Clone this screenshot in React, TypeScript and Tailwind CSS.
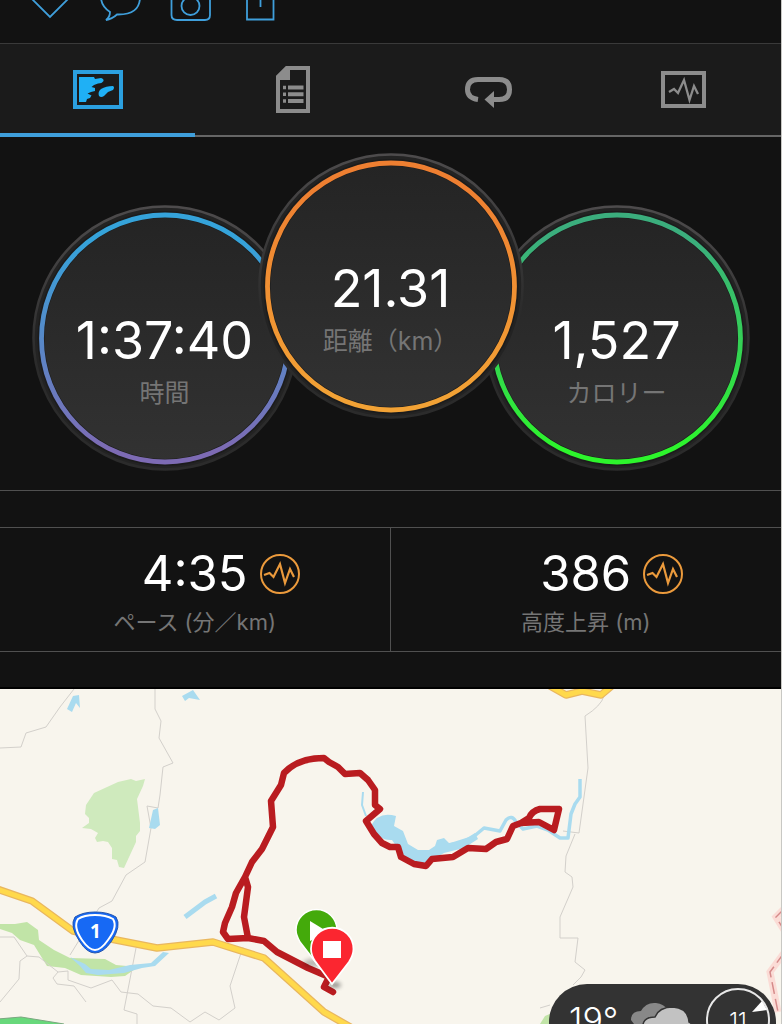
import React from 'react';

const PULSE = 'M-16 1 L-10.500 -1 L-6.500 3 L0 -10 L5 9 L10 -5 L14 3';

const tabs = [
  {
    id: 'map',
    label: 'マップ',
    icon: (
      <svg className="w-[52px] h-12" viewBox="72 66 52 48">
        <rect x="75" y="72" width="46" height="35" fill="none" stroke="currentColor" strokeWidth="4" />
        <path
          fill="#1fb0f5"
          d="M79 77H94L95 79L101 78Q104 79 103.500 81Q102 83.500 98 83.500L94 85L91.500 87L95 88V91L91 92L87.500 93.500L91.500 95.500L90 98L87 99L86 102H79ZM99 96Q97.500 92 101 89Q106 86 113 86Q115 87 113 90L108 92L104 96Q101 98 99 96Z"
        />
      </svg>
    ),
  },
  {
    id: 'details',
    label: '詳細',
    icon: (
      <svg className="w-[52px] h-12" viewBox="267 66 52 48">
        <path fill="none" stroke="currentColor" strokeWidth="4" d="M278 77L287 68H308V111H278Z" />
        <path fill="currentColor" d="M276 76L286 66H290V80H276Z" />
        <path stroke="currentColor" strokeWidth="4" d="M288 87.500H303.500M288 94.300H303.500M288 101.100H303.500" />
        <path stroke="currentColor" strokeWidth="3.500" d="M283 87.500H286M283 94.300H286M283 101.100H286" />
      </svg>
    ),
  },
  {
    id: 'laps',
    label: 'ラップ',
    icon: (
      <svg className="w-[52px] h-12" viewBox="462 66 52 48">
        <path fill="none" stroke="currentColor" strokeWidth="5" d="M478 99.500Q467.500 98 467.500 89.500Q467.500 79.500 478 79.500H499Q509.500 79.500 509.500 89.500Q509.500 99.500 499 99.500H492" />
        <path fill="currentColor" d="M484.500 99.500L494 91V108Z" />
      </svg>
    ),
  },
  {
    id: 'charts',
    label: 'グラフ',
    icon: (
      <svg className="w-[52px] h-12" viewBox="657 66 52 48">
        <rect x="663" y="73" width="41" height="33" fill="none" stroke="currentColor" strokeWidth="4" />
        <path fill="none" stroke="currentColor" strokeWidth="2.300" d="M669 92L674 89L678 93L684 80L689.500 100L694 86L698 94" />
      </svg>
    ),
  },
];

const rings = [
  { id: 'time', value: '1:37:40', label: '時間', from: '#35a3da', to: '#7d6bb4', place: 'mt-[52px]' },
  { id: 'distance', value: '21.31', label: '距離（km）', from: '#ee7f31', to: '#f2a235', place: '-mx-10 z-10' },
  { id: 'calories', value: '1,527', label: 'カロリー', from: '#3bae7d', to: '#2df52c', place: 'mt-[52px]' },
];

const stats = [
  { id: 'pace', value: '4:35', label: 'ペース (分／km)' },
  { id: 'climb', value: '386', label: '高度上昇 (m)' },
];

const ActionBar = () => (
  <header className="h-11 border-b border-[#3a3a3a] px-[30px]">
    <div className="flex gap-7 text-[#3f9fdb]">
      <button type="button" aria-label="いいね" className="block">
        <svg className="block w-[42px] h-6" viewBox="30 0 42 24" fill="none" stroke="currentColor" strokeWidth="1.800">
          <path d="M32 -1L50 17L68 -1" />
        </svg>
      </button>
      <button type="button" aria-label="コメント" className="block">
        <svg className="block w-[42px] h-6" viewBox="100 0 42 24" fill="none" stroke="currentColor" strokeWidth="1.800">
          <path d="M101 -3Q101 6 110 12Q110 17 106 20Q112 19 117 14.500Q140 15 140 -3" />
        </svg>
      </button>
      <button type="button" aria-label="写真" className="block">
        <svg className="block w-[42px] h-6" viewBox="170 0 42 24" fill="none" stroke="currentColor" strokeWidth="1.800">
          <path d="M171.500 -4V15Q171.500 20 177 20H205Q210 20 210 15V-4" />
          <circle cx="190.500" cy="6" r="9" />
        </svg>
      </button>
      <button type="button" aria-label="共有" className="block">
        <svg className="block w-[42px] h-6" viewBox="240 0 42 24" fill="none" stroke="currentColor" strokeWidth="1.800">
          <path d="M247 -2V19.500H273.500V-2M260.500 -2V7" />
        </svg>
      </button>
    </div>
  </header>
);

const TabBar = () => (
  <nav role="tablist" className="grid grid-cols-4 bg-[#1b1b1b]">
    {tabs.map((tab, i) => (
      <button
        key={tab.id}
        type="button"
        role="tab"
        aria-label={tab.label}
        aria-selected={i === 0}
        className={
          i === 0
            ? 'flex h-[93px] items-center justify-center border-b-4 border-[#3f9fdb] pt-0.5 text-[#2ba0e0]'
            : 'flex h-[93px] items-center justify-center border-b-2 border-[#666] text-[#8c8c8c]'
        }
      >
        {tab.icon}
      </button>
    ))}
  </nav>
);

const Rings = () => (
  <section className="flex items-start justify-center border-b border-[#505050] pt-4 pb-[19px]">
    {rings.map((ring) => (
      <div key={ring.id} className={`relative grid size-[266px] shrink-0 ${ring.place}`}>
        <svg className="col-start-1 row-start-1 size-[266px]" viewBox="0 0 266 266">
          <defs>
            <linearGradient id={`${ring.id}-ring`} x1="0" y1="0" x2="0" y2="1">
              <stop offset="0.1" stopColor={ring.from} />
              <stop offset="0.95" stopColor={ring.to} />
            </linearGradient>
            <linearGradient id={`${ring.id}-face`} x1="0" y1="0" x2="0" y2="1">
              <stop offset="0" stopColor="#242424" />
              <stop offset="1" stopColor="#323232" />
            </linearGradient>
            <linearGradient id={`${ring.id}-edge`} x1="0" y1="0" x2="0" y2="1">
              <stop offset="0" stopColor="#4d4b4c" />
              <stop offset="0.6" stopColor="#2b2b2b" />
              <stop offset="1" stopColor="#2b2b2b" />
            </linearGradient>
          </defs>
          <circle cx="133" cy="133" r="131.500" fill="#232323" stroke={`url(#${ring.id}-edge)`} strokeWidth="2.500" />
          <circle cx="133" cy="133.500" r="124" fill={`url(#${ring.id}-face)`} stroke="#1c1c1c" strokeWidth="7" />
          <circle cx="133" cy="133.500" r="123.500" fill="none" stroke={`url(#${ring.id}-ring)`} strokeWidth="4.800" />
        </svg>
        <div className="col-start-1 row-start-1 pt-[106px] text-center">
          <p className="text-[52px] leading-[60px] text-white">{ring.value}</p>
          <p className="mt-1 text-[25px] leading-9 text-[#757575]">{ring.label}</p>
        </div>
      </div>
    ))}
  </section>
);

const Stats = () => (
  <section className="mt-9 mb-[35px] grid grid-cols-2 divide-x divide-[#505050] border-y border-[#505050]">
    {stats.map((stat) => (
      <div key={stat.id} className="h-[123px] pt-4">
        <div className="grid grid-cols-[1fr_auto_1fr] items-center gap-x-3">
          <p className="col-start-2 text-[49px] leading-[60px] text-white">{stat.value}</p>
          <button type="button" aria-label={`${stat.label} グラフ`} className="size-10">
            <svg className="size-10" viewBox="-20 -20 40 40" fill="none" stroke="#eb9a3c" strokeWidth="2">
              <circle r="19" />
              <path d={PULSE} strokeWidth="2.200" />
            </svg>
          </button>
        </div>
        <p className="text-center text-[22px] leading-9 text-[#757575]">{stat.label}</p>
      </div>
    ))}
  </section>
);

const RouteMap = () => (
  <svg className="block w-full" viewBox="0 689 781 335" role="img" aria-label="ルートマップ">
    <defs>
      <filter id="pin-shadow" x="-50%" y="-50%" width="200%" height="200%">
        <feGaussianBlur stdDeviation="2" />
      </filter>
    </defs>
    <rect y="689" width="782" height="336" fill="#f8f5ed" />

    {/* parks */}
    <g fill="#cfeabd">
      <path d="M145 779L143 786L137 799L140 823L140 831L136 836V842L124 868L119 867L117 860L112 859V848L108 842L103 841L97 842L95 838L98 833L91 829L82 828L89 823V818L85 814L86 805L94 793L118 782L131 779L136 781Z" />
      <path fill="#c1e4a7" d="M0 924L15 924L27 922L38 930L39 940L54 950L70 958L105 959L116 965L138 967L125 976L111 977L81 975L65 968L47 966L34 945L20 940L12 933L0 929Z" />
      <path fill="#c1e4a7" d="M540 1024L545 1016L552 1013V1024Z" />
    </g>
    <path d="M-2 1019L21 1017L64 1024V1030H-2Z" fill="#68d87b" stroke="#7aa77f" strokeWidth="1" />

    {/* minor roads */}
    <g fill="none" stroke="#d3d0cb" strokeWidth="1">
      <path d="M0 748L21 747L26 733L46 727L60 707L74 689" />
      <path d="M155 689V709L161 721L159 738L173 763L163 767L160 795L158 808L147 806L151 828L145 862L126 875L112 901L99 908L70 955" />
      <path d="M0 937H14L27 956L39 957L58 972L68 971V980L91 988L112 980L121 992L138 994L153 1006L171 1008L190 1022L205 1012L219 1020L235 1008L230 986L243 947" />
      <path d="M27 956L20 961L19 979L0 1002M58 972L53 978L57 984L74 986L86 1002M136 948L124 1010L137 1014V1024" />
      <path d="M604 696Q601 706 585 716L588 768L579 833L563 831M575 834L566 856L565 872L572 877L573 887L560 917V938H578L575 962L585 970L581 977L573 985M540 1008L550 1005" />
    </g>

    {/* water */}
    <g fill="#a9dbef">
      <path d="M73 696L79 695L80 708L76 703L72 712L67 709ZM182 696L193 690L200 700L189 698L185 701ZM153 810L158 808L160 825L155 829L149 828Z" />
      <path d="M371 826Q378 811 396 816L394 826L403 831L408 844L418 850L429 850L435 846L437 840L444 838L449 843L462 841L475 833L478 839L464 848L444 853L430 861L424 864L407 860L401 853L392 840Q379 841 371 826Z" />
      <path d="M70 957L85 964L91 969L109 970L130 965L151 963L163 952L169 953L155 966L142 968L124 973L98 975L86 973L80 966Z" />
    </g>
    <g fill="none" stroke="#a9dbef" strokeWidth="4" strokeLinejoin="round">
      <path d="M185 917L205 902L216 896" strokeWidth="5" />
      <path d="M363 792L362 805L366 816" strokeWidth="2" />
      <path d="M450 845L472 838L484 828L500 831L506 820Q512 814 516 822L523 829L537 826L548 830L560 838L568 838L571 814L575 804L580 797V779" strokeWidth="3.500" />
    </g>

    {/* national roads */}
    <g fill="none" strokeLinejoin="round">
      <path d="M-3 889L32 901L73 931L116 940L157 948L213 942L264 958L324 1012L352 1028M550 686L566 695L582 691L601 695L614 684" stroke="#e9b75f" strokeWidth="7.500" />
      <path d="M-3 889L32 901L73 931L116 940L157 948L213 942L264 958L324 1012L352 1028M550 686L566 695L582 691L601 695L614 684" stroke="#ffd94c" strokeWidth="5" />
    </g>

    {/* boundary */}
    <g fill="none">
      <path d="M784 909L776 917L784 930M784 953L770 972L778 1012" stroke="#fbdcd6" strokeWidth="7" />
      <path d="M784 909L776 917L784 930M784 953L770 972L778 1012" stroke="#d58b8a" strokeWidth="1.500" strokeDasharray="12 5" />
    </g>

    {/* recorded track */}
    <path
      d="M333 992L324 987L329 977L308 968L277 952L264 941L248 938L244 917L248 887L245 877L236 893L232 907L225 923L223 932L228 939L248 938M245 877L252 862L262 849L273 827L271 801L281 785L284 773Q298 758 324 758L329 762L338 767L345 774L360 773L368 780L375 790L375 805L380 809L366 821L374 834L382 843L390 847L398 847L401 857L414 864L426 866L432 859L453 857L468 848L486 849L496 842L507 839L513 826L521 823L539 822L554 830L559 809L540 809Q532 811 529 818L521 823"
      fill="none"
      stroke="#b91c20"
      strokeWidth="6.500"
      strokeLinejoin="round"
      strokeLinecap="round"
    />

    {/* route shield */}
    <path d="M95 912Q108 912 116 917Q122 926 111 942Q103 953 95 953Q87 953 80 942Q69 926 75 917Q83 912 95 912Z" fill="#1769f4" stroke="#2455ad" strokeWidth="1" />
    <path d="M95 915Q106 915 113 919Q118 927 108 940Q101 950 95 950Q89 950 82 940Q73 927 78 919Q84 915 95 915Z" fill="#1769f4" stroke="#fff" strokeWidth="2" />
    <text x="95.500" y="938" textAnchor="middle" fill="#fff" fontSize="19" fontWeight="700" fontFamily="Noto Sans">1</text>

    {/* start and finish pins */}
    <ellipse cx="313" cy="963" rx="10" ry="4" fill="#000" opacity="0.25" filter="url(#pin-shadow)" />
    <ellipse cx="335" cy="985" rx="6" ry="3" fill="#000" opacity="0.4" filter="url(#pin-shadow)" />
    <path d="M317 964L300 942Q296 935 296 930A20.500 20.500 0 0 1 337 930Q337 936 333 942Z" fill="#44aa0b" stroke="#fff" strokeWidth="1.500" />
    <path d="M310 921L328 932L310 941Z" fill="#fff" />
    <path d="M332 984L315 961Q311 955 311 949A21 21 0 0 1 353.500 949Q353.500 955 349 962Z" fill="#fb2630" stroke="#fff" strokeWidth="1.800" />
    <rect x="323" y="941" width="18" height="17" fill="#fff" />
  </svg>
);

const Weather = () => (
  <aside className="absolute right-[5px] bottom-0 h-10 w-[227px] overflow-hidden rounded-t-[38px] bg-[#333]">
    <div className="flex h-[72px] items-center pr-1.5 pl-5 text-white">
      <span className="w-[60px] text-[34px] leading-9 font-light">19°</span>
      <svg className="h-12 w-16" viewBox="628 996 64 48">
        <path d="M630 1020Q630 1011 640 1011Q645 1002 655 1003Q663 1004 667 1010L660 1024H633Z" fill="#888" />
        <path d="M642 1030Q640 1017 654 1017Q658 1007 672 1007Q687 1008 688 1022Q694 1025 693 1036H642Z" fill="#c2c2c2" stroke="#333" strokeWidth="1.500" />
      </svg>
      <div className="ml-auto grid size-16 shrink-0 place-items-center">
        <svg className="col-start-1 row-start-1 size-16" viewBox="-32 -32 64 64">
          <circle r="31" fill="none" stroke="#e8e8e8" strokeWidth="2" />
          <path d="M14 -8L24 -19L29 -10Z" fill="#fff" />
        </svg>
        <span className="col-start-1 row-start-1 text-[22px] leading-6 font-light">11</span>
      </div>
    </div>
  </aside>
);

const App = () => {
  return (
    <main className="w-full overflow-hidden border-r border-[#c8c8c4] bg-[#121212] font-[Inter,'Noto_Sans_CJK_JP',sans-serif]" lang="ja">
      <ActionBar />
      <TabBar />
      <Rings />
      <Stats />
      <section className="relative border-t-2 border-black">
        <RouteMap />
        <Weather />
      </section>
    </main>
  );
};

export default App;
